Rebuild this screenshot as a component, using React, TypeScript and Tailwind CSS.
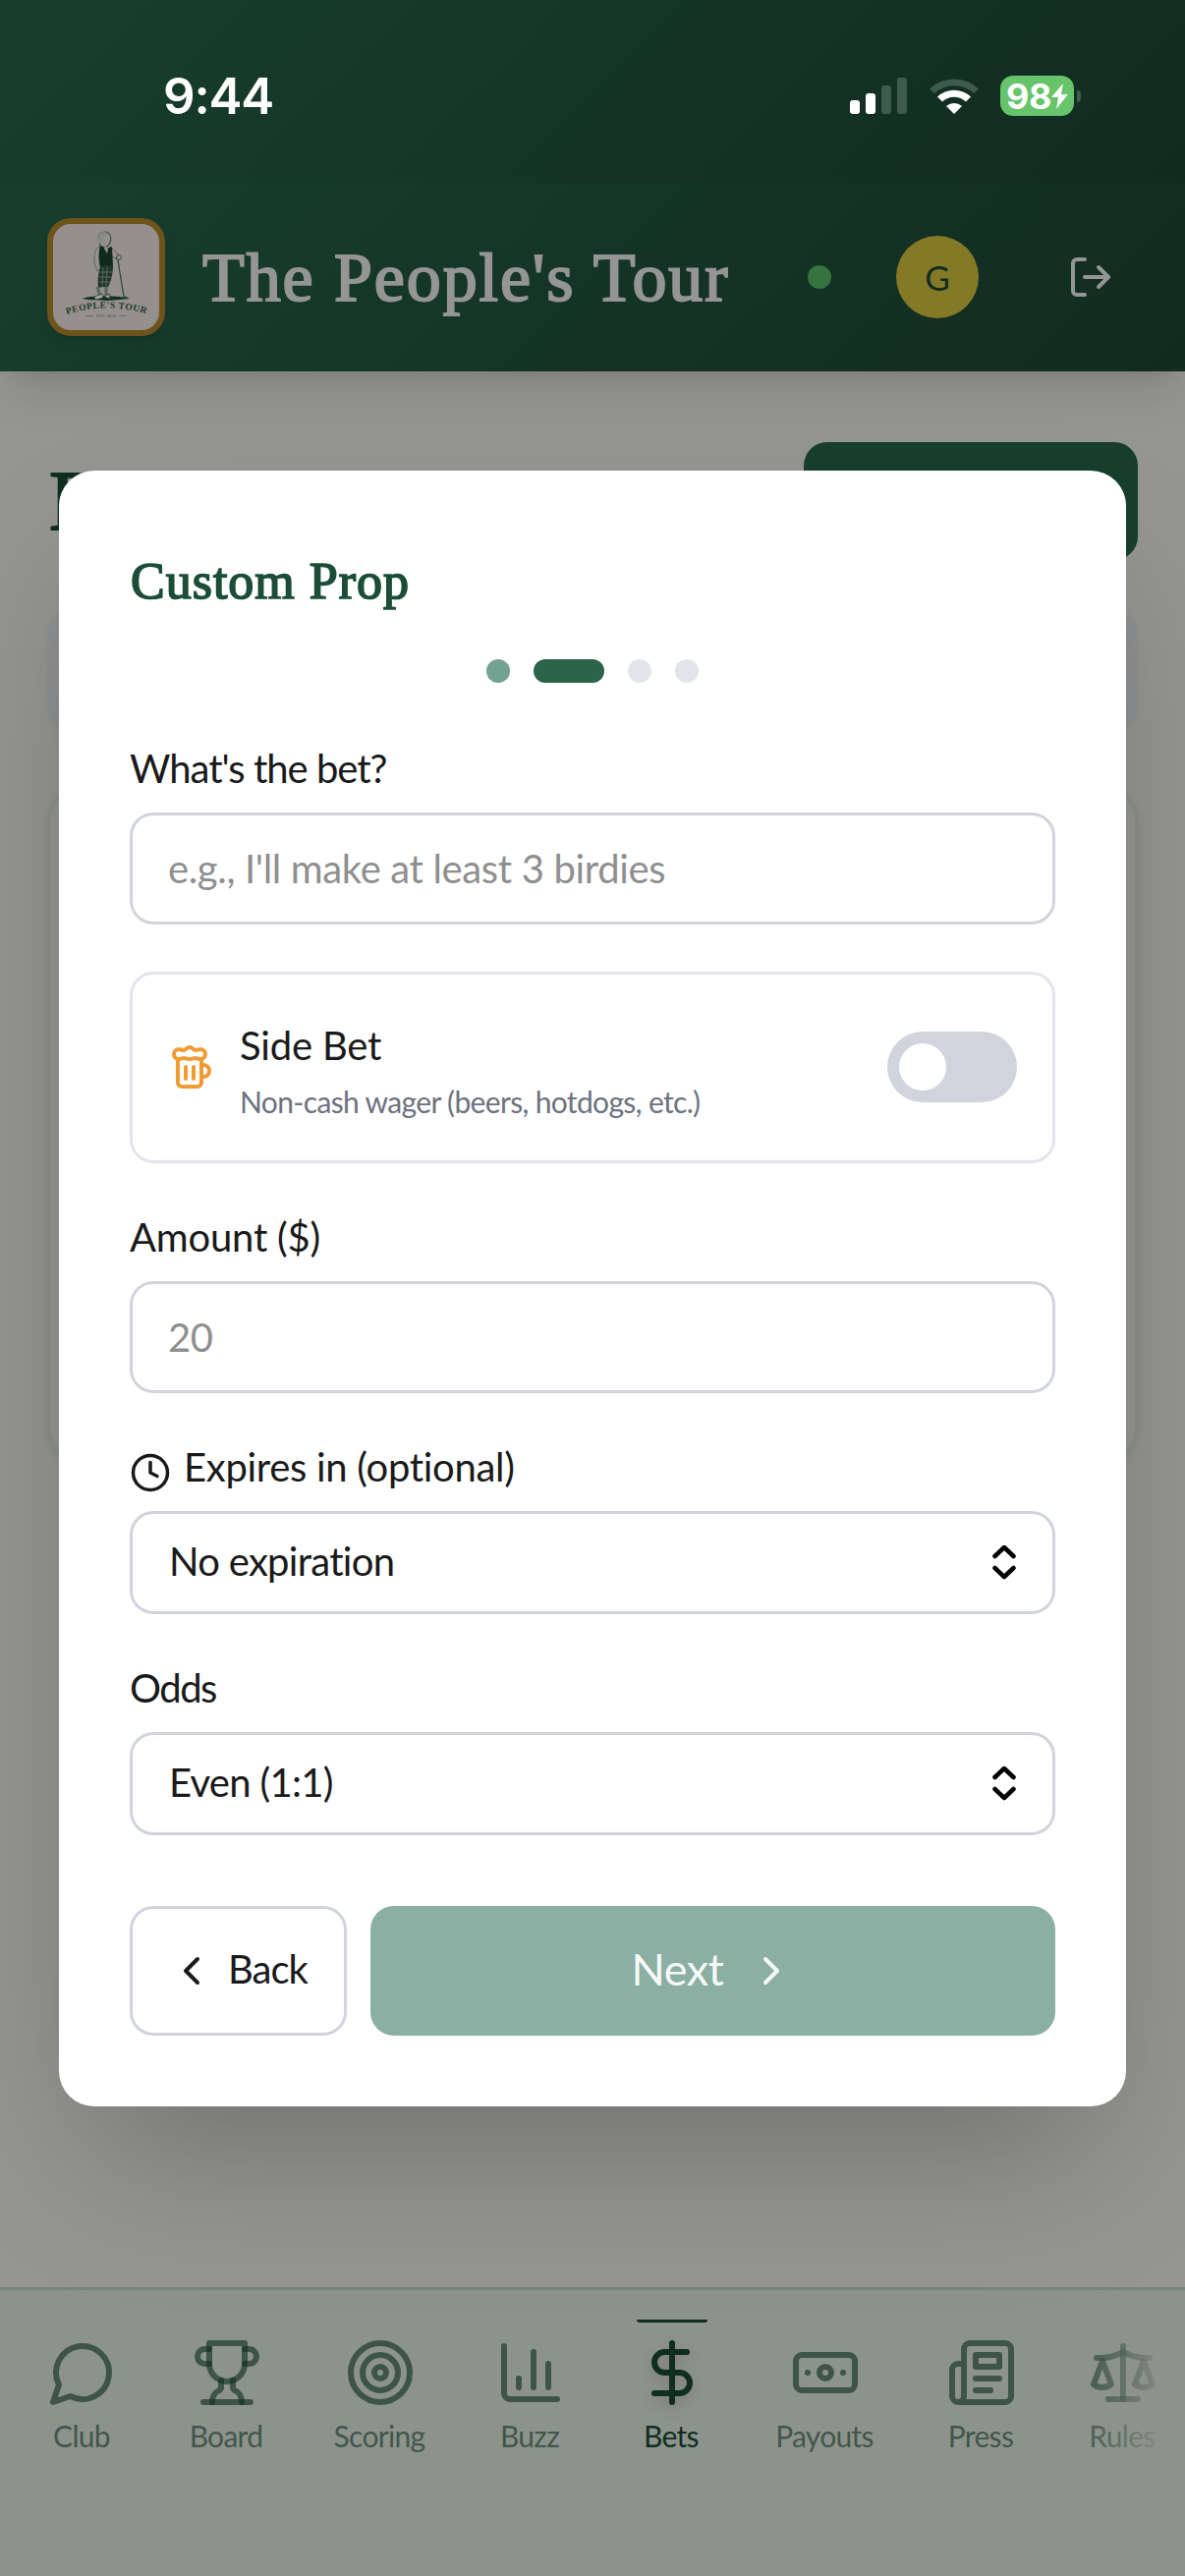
import React from 'react';
import { Banknote, Beer, ChevronLeft, ChevronRight, Clock, DollarSign, Target } from 'lucide-react';

function Icon({ children }: { children: React.ReactNode }) {
  return (
    <svg
      viewBox="0 0 24 24"
      fill="none"
      stroke="currentColor"
      strokeWidth="2"
      strokeLinecap="round"
      strokeLinejoin="round"
      className="size-[72px] shrink-0"
    >
      {children}
    </svg>
  );
}

const tabs = [
  {
    label: 'Club',
    width: 'w-[72px]',
    icon: (
      <Icon>
        <path d="M7.9 20A9 9 0 1 0 4 16.1L2 22Z" />
      </Icon>
    ),
  },
  {
    label: 'Board',
    width: 'w-[78px]',
    icon: (
      <Icon>
        <path d="M6 9H4.5a2.5 2.5 0 0 1 0-5H6" />
        <path d="M18 9h1.5a2.5 2.5 0 0 0 0-5H18" />
        <path d="M4 22h16" />
        <path d="M10 14.66V17c0 .55-.47.98-.97 1.21C7.85 18.75 7 20.24 7 22" />
        <path d="M14 14.66V17c0 .55.47.98.97 1.21C16.15 18.75 17 20.24 17 22" />
        <path d="M18 2H6v7a6 6 0 0 0 12 0V2Z" />
      </Icon>
    ),
  },
  {
    label: 'Scoring',
    width: 'w-[90px]',
    icon: <Target className="size-[72px] shrink-0" />,
  },
  {
    label: 'Buzz',
    width: 'w-[72px]',
    icon: (
      <Icon>
        <path d="M3 3v16a2 2 0 0 0 2 2h16" />
        <path d="M18 17V9" />
        <path d="M13 17V5" />
        <path d="M8 17v-3" />
      </Icon>
    ),
  },
  {
    label: 'Bets',
    width: 'w-[72px]',
    active: true,
    icon: <DollarSign className="size-[72px] shrink-0 drop-shadow-[0_6px_6px_rgba(60,40,40,0.2)]" />,
  },
  {
    label: 'Payouts',
    width: 'w-[96px]',
    icon: <Banknote className="size-[72px] shrink-0" />,
  },
  {
    label: 'Press',
    width: 'w-[78px]',
    icon: (
      <Icon>
        <path d="M4 22h16a2 2 0 0 0 2-2V4a2 2 0 0 0-2-2H8a2 2 0 0 0-2 2v16a2 2 0 0 1-2 2Zm0 0a2 2 0 0 1-2-2v-9c0-1.1.9-2 2-2h2" />
        <path d="M18 14h-8" />
        <path d="M15 18h-5" />
        <path d="M10 6h8v4h-8V6Z" />
      </Icon>
    ),
  },
  {
    label: 'Rules',
    width: 'w-[66px]',
    icon: (
      <Icon>
        <path d="m16 16 3-8 3 8c-.87.65-1.92 1-3 1s-2.13-.35-3-1Z" />
        <path d="m2 16 3-8 3 8c-.87.65-1.92 1-3 1s-2.13-.35-3-1Z" />
        <path d="M7 21h10" />
        <path d="M12 3v18" />
        <path d="M3 7h2c2 0 5-1 7-2 2 1 5 2 7 2h2" />
      </Icon>
    ),
  },
];

function StatusBar() {
  return (
    <div className="flex h-[186px] items-start justify-between bg-linear-[135deg] from-[#183f2d] via-[#143427] to-[#122b20] pt-[77px] pr-[106px] pl-[166px]">
      <span className="font-['Inter'] text-[51px] leading-[41px] font-semibold tracking-[-1.2px] text-white">9:44</span>
      <div className="flex items-start">
        <svg viewBox="0 0 58 41" className="mr-[22px] h-[41px] w-[58px]">
          <rect x="0" y="25" width="10" height="14" rx="3" fill="#fff" />
          <rect x="16" y="18" width="10" height="21" rx="3" fill="#fff" />
          <rect x="32" y="10" width="10" height="29" rx="3" fill="#3f5b50" />
          <rect x="48" y="2" width="10" height="37" rx="3" fill="#3f5b50" />
        </svg>
        <svg viewBox="0 0 52 41" className="mr-[21px] h-[41px] w-[52px]">
          <path d="M1 13.5a36 36 0 0 1 50 0l-5 4.5a29.5 29.5 0 0 0-40 0z" fill="#3f5b50" />
          <path d="M9 21.5a25 25 0 0 1 34 0l-5 5a17.5 17.5 0 0 0-24 0z" fill="#fff" />
          <path d="M18 31a12 12 0 0 1 16 0l-8 8z" fill="#fff" />
        </svg>
        <div className="flex h-[41px] w-[75px] items-center rounded-[13px] bg-[#66c46a] pl-[6px]">
          <span className="font-['Inter'] text-[36px] leading-none font-bold tracking-[-0.5px] text-white">98</span>
          <svg viewBox="0 0 17 26" className="h-[26px] w-[17px] shrink-0">
            <path d="M12 0 0 14h7L5 26 17 11h-7z" fill="#fff" />
          </svg>
        </div>
        <div className="mt-[15px] ml-[3px] h-[12px] w-[4px] rounded-r-full bg-[#3f5b50]" />
      </div>
    </div>
  );
}

function ClubLogo() {
  return (
    <div className="size-[120px] shrink-0 rounded-[24px] border-6 border-[#6e541b] bg-[#95908d] shadow-[0_6px_12px_rgba(0,0,0,0.1)]">
      <svg viewBox="0 0 108 108" className="size-[108px]">
        <path d="M30 76c8-3 30-4 49 0-8 1-16 1-24 2-9-1-17 0-25-2z" fill="#12301f" />
        <path d="M46 13c1-5 9-7 12-2 2 4 0 9-2 11-4 3-8 1-9-2z" fill="#95908d" stroke="#3f5147" strokeWidth="1.2" />
        <path d="M46 20c-2-4-1-11 5-12 4 0 7 2 7 5-5-2-8 0-8 7z" fill="#858a83" />
        <path d="M47 23c-5 3-5 9-5 16l3 9 4-3-1-21zM59 24c5 3 6 7 9 9l-3 3-6-4z" fill="#95908d" stroke="#5a675f" strokeWidth="1" />
        <path d="M48 22l6 3 6-2 1 20-13 1c-2-7-2-14 0-22z" fill="#10291d" />
        <path d="m53 22 3 3-1 5-3-5z" fill="#95908d" />
        <path d="M48 43l13-1c0 9-2 17-5 22h-5l-5 1c-1-7 0-14 2-22z" fill="#1f362a" />
        <path d="M48 49h12M47 54h13M47 59h11M51 44l-1 20M55 44l-1 20" stroke="#737b74" strokeWidth=".7" />
        <path d="M45 64l3 9M54 64l0 9" stroke="#5a675f" strokeWidth="3" />
        <path d="M42 74l8-3 1 4-8 2zM52 74l5-3 1 5z" fill="#aaa6a2" stroke="#273d31" strokeWidth=".8" />
        <circle cx="67" cy="34" r="2.5" fill="#95908d" stroke="#33483d" />
        <path d="m66 37 6 37 4 1" fill="none" stroke="#33483d" strokeWidth="1.3" />
        <path id="logo-arc" d="M14 92Q54 79 97 92" fill="none" />
        <text fill="#1d392b" fontSize="9.5" fontWeight="700" className="font-['Liberation_Serif']">
          <textPath href="#logo-arc" textLength="82">PEOPLE'S TOUR</textPath>
        </text>
        <text x="54" y="95" fill="#3f5147" fontSize="4.8" textAnchor="middle" className="font-['Liberation_Serif']">
          EST. 2026
        </text>
        <path d="M33 93.5h8M67 93.5h8" stroke="#5a675f" strokeWidth=".8" />
      </svg>
    </div>
  );
}

function Header() {
  return (
    <header className="relative shadow-[0_30px_45px_-9px_rgba(0,0,0,0.1),0_12px_18px_-12px_rgba(0,0,0,0.1)]">
      <StatusBar />
      <div className="flex h-[192px] items-center bg-linear-[135deg] from-[#183f2d] via-[#143427] to-[#122b20] pl-[48px]">
        <ClubLogo />
        <h1 className="ml-[38px] w-[616px] pt-[2px] font-['Liberation_Serif'] text-[70px] leading-[80px] tracking-[1.9px] whitespace-nowrap text-[#959595] [-webkit-text-stroke:2px_#959595]">
          The People's Tour
        </h1>
        <span className="size-[24px] rounded-full bg-[#37733f]" />
        <div className="ml-[66px] flex size-[84px] items-center justify-center rounded-full bg-[#857826] font-['Lato'] text-[35px] text-[#102d21]">
          G
        </div>
        <svg
          viewBox="0 0 24 24"
          fill="none"
          stroke="#959595"
          strokeWidth="2"
          strokeLinecap="round"
          strokeLinejoin="round"
          className="ml-[90px] size-[48px]"
        >
          <path d="M9 21H5a2 2 0 0 1-2-2V5a2 2 0 0 1 2-2h4" />
          <path d="m16 17 5-5-5-5" />
          <path d="M21 12H9" />
        </svg>
      </div>
    </header>
  );
}

function BetsPage() {
  return (
    <main className="flex-1 px-[48px] pt-[72px]">
      <div className="flex h-[120px] items-center justify-between">
        <h2 className="pl-[2px] font-['Liberation_Serif'] text-[86px] leading-[116px] text-[#102d21] [-webkit-text-stroke:2px_#102d21]">
          Bets
        </h2>
        <div className="h-[120px] w-[340px] rounded-[24px] bg-[#183f2c]" />
      </div>
      <div className="mt-[50px] h-[126px] rounded-[24px] bg-[#909192]" />
      <div className="mt-[54px] h-[688px] rounded-[36px] border-3 border-[#8a908c] bg-[#969694] shadow-[0_3px_9px_rgba(0,0,0,0.08)]" />
    </main>
  );
}

function BottomNav() {
  return (
    <nav className="relative flex h-[294px] items-start gap-[72px] overflow-hidden border-t-3 border-[#75867b] bg-[#8c938b] pl-[48px]">
      {tabs.map((tab) => (
        <div
          key={tab.label}
          className={`${tab.width} flex shrink-0 flex-col items-center pt-[30px] ${tab.active ? 'text-[#102d21]' : 'text-[#102d21]/62'}`}
        >
          <span className={`h-[3px] w-[72px] rounded-b-full ${tab.active ? 'bg-[#102d21]' : ''}`} />
          <div className="mt-[15px]">{tab.icon}</div>
          <span className="mt-[10px] pr-[2px] font-['Lato'] text-[30px] leading-[36px] tracking-[-0.7px]">{tab.label}</span>
        </div>
      ))}
      <div className="absolute top-0 right-0 h-full w-[110px] bg-linear-to-r from-transparent to-[#8c938b] to-90%" />
    </nav>
  );
}

function Label({ children, className = '' }: { children: React.ReactNode; className?: string }) {
  return (
    <label
      className={`mb-[15px] flex h-[60px] items-center font-['Lato'] text-[40px] leading-[60px] text-[#1a1a1a] [font-variant-ligatures:none] ${className}`}
    >
      {children}
    </label>
  );
}

function TextInput({ placeholder }: { placeholder: string }) {
  return (
    <input
      type="text"
      placeholder={placeholder}
      className="block h-[114px] w-full rounded-[24px] border-3 border-[#d1d4dc] bg-white px-[36px] font-['Lato'] text-[40px] tracking-[-0.35px] placeholder:text-[#8f8f8f]"
    />
  );
}

function SelectBox({ value }: { value: string }) {
  return (
    <button className="flex h-[105px] w-full items-center justify-between rounded-[24px] border-3 border-[#d1d4dc] bg-white pr-[36px] pb-[3px] pl-[37px] font-['Lato'] text-[40px] tracking-[-0.7px] text-[#1a1a1a] [font-variant-ligatures:none]">
      {value}
      <svg
        viewBox="0 0 26 36"
        fill="none"
        stroke="#000"
        strokeWidth="4.5"
        strokeLinecap="round"
        strokeLinejoin="round"
        className="mt-[3px] h-[36px] w-[26px]"
      >
        <path d="m3.5 12 9.5-9 9.5 9M3.5 24l9.5 9 9.5-9" />
      </svg>
    </button>
  );
}

function CustomPropModal() {
  return (
    <div className="absolute inset-0 flex items-center justify-center">
      <div className="h-[1665px] w-[1086px] rounded-[36px] bg-white p-[72px] shadow-[0_75px_150px_-36px_rgba(0,0,0,0.25)]">
        <h3 className="pt-px pl-[1px] font-['Liberation_Serif'] text-[52px] leading-[79px] tracking-[1px] text-[#1c4d38] [-webkit-text-stroke:1.7px_#1c4d38]">
          Custom Prop
        </h3>
        <div className="mt-[40px] mb-[57px] flex justify-center gap-[24px]">
          <span className="size-[24px] rounded-full bg-[#74a292]" />
          <span className="h-[24px] w-[72px] rounded-full bg-[#2a644a]" />
          <span className="size-[24px] rounded-full bg-[#e4e5eb]" />
          <span className="size-[24px] rounded-full bg-[#e4e5eb]" />
        </div>

        <Label className="tracking-[-1px]">What's the bet?</Label>
        <TextInput placeholder="e.g., I'll make at least 3 birdies" />

        <div className="mt-[48px] mb-[45px] flex h-[195px] items-center rounded-[24px] border-3 border-[#e4e5eb] px-[36px]">
          <Beer className="size-[48px] text-[#f09c33]" />
          <div className="ml-[25px] flex-1 pt-[6px] font-['Lato']">
            <div className="text-[40px] leading-[60px] tracking-[-0.2px] text-[#1a1a1a]">Side Bet</div>
            <div className="pt-[3px] text-[30px] leading-[48px] tracking-[-0.65px] text-[#6c7280]">
              Non-cash wager (beers, hotdogs, etc.)
            </div>
          </div>
          <div className="flex h-[72px] w-[132px] items-center rounded-full bg-[#d1d4dc] pl-[12px]">
            <span className="size-[48px] rounded-full bg-white" />
          </div>
        </div>

        <Label className="tracking-[-0.2px]">Amount ($)</Label>
        <TextInput placeholder="20" />

        <div className="mt-[45px]">
          <Label className="tracking-[-0.3px]">
            <Clock className="mt-[12px] mr-[13px] size-[42px]" />
            Expires in (optional)
          </Label>
          <SelectBox value="No expiration" />
        </div>

        <div className="mt-[45px]">
          <Label className="tracking-[-1.5px]">Odds</Label>
          <SelectBox value="Even (1:1)" />
        </div>

        <div className="mt-[72px] flex h-[132px] gap-[24px] font-['Lato']">
          <button className="flex w-[221px] items-center rounded-[24px] border-3 border-[#d1d4dc] pl-[36px] text-[40px] tracking-[-1px] text-[#1a1a1a]">
            <ChevronLeft className="size-[48px]" />
            <span className="ml-[13px] pb-[4px]">Back</span>
          </button>
          <button className="flex flex-1 items-center justify-center gap-[24px] rounded-[24px] bg-[#8bb0a3] text-[45px] tracking-[-0.4px] text-[#f6f9f8]">
            <span className="pb-[2px]">Next</span>
            <ChevronRight className="size-[48px]" />
          </button>
        </div>
      </div>
    </div>
  );
}

export default function App() {
  return (
    <div className="relative flex h-[2622px] w-[1206px] flex-col overflow-hidden bg-[#959592]">
      <Header />
      <BetsPage />
      <BottomNav />
      <CustomPropModal />
    </div>
  );
}
